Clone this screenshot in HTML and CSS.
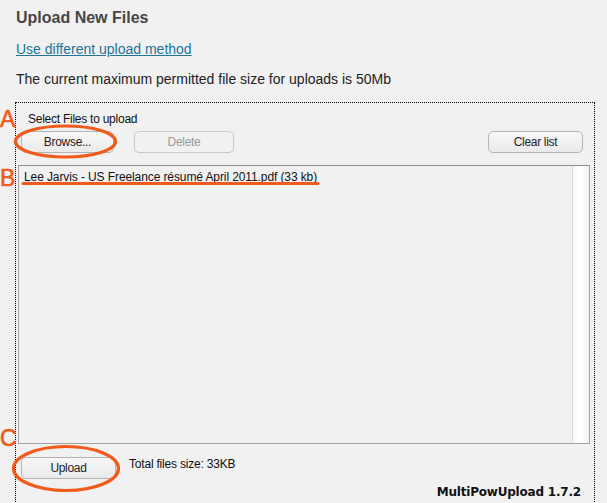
FILE: index.html
```html
<!DOCTYPE html>
<html lang="en">
<head>
    <meta charset="UTF-8">
    <title>Upload New Files</title>
    <link rel="stylesheet" href="styles.css">
</head>
<body>
    <div class="page">
        <h2 class="title">Upload New Files</h2>
        <p class="switch"><a href="#">Use different upload method</a></p>
        <p class="limit">The current maximum permitted file size for uploads is 50Mb</p>

        <div class="uploader">
            <div class="label">Select Files to upload</div>
            <div class="toolbar">
                <button class="btn btn-browse">Browse...</button>
                <button class="btn btn-delete" disabled>Delete</button>
                <button class="btn btn-clear">Clear list</button>
            </div>
            <div class="file-list">
                <ul class="files">
                    <li>Lee Jarvis - US Freelance résumé April 2011.pdf (33 kb)</li>
                </ul>
                <div class="scrollbar"></div>
            </div>
            <div class="footer">
                <button class="btn btn-upload">Upload</button>
                <span class="total">Total files size: 33KB</span>
            </div>
            <div class="brand">MultiPowUpload 1.7.2</div>
        </div>
    </div>

    <!-- annotations drawn over the screenshot -->
    <span class="mark mark-a">A</span>
    <span class="mark mark-b">B</span>
    <span class="mark mark-c">C</span>
    <svg class="marks" width="607" height="503" viewBox="0 0 607 503">
        <ellipse cx="65.5" cy="141.5" rx="50" ry="15.5" />
        <line x1="23" y1="183.5" x2="318" y2="183.5" />
        <ellipse cx="66" cy="468.5" rx="52.5" ry="22" />
    </svg>
</body>
</html>
```

FILE: styles.css
```css
:root {
    --bg: #f1f1f1;
    --text: #222;
    --link: #21759b;
    --orange: #f05a1a;
    --btn-border: #b4b4b4;
}

* {
    box-sizing: border-box;
}

html, body {
    margin: 0;
    padding: 0;
    height: 100%;
    overflow: hidden;
}

body {
    background: var(--bg);
    font-family: "Liberation Sans", Arial, sans-serif;
    color: var(--text);
    position: relative;
}

.page {
    padding: 8px 12px 0 16px;
}

.title {
    margin: 0;
    font-size: 16px;
    line-height: 19px;
    font-weight: bold;
    color: #464646;
}

.switch {
    margin: 14px 0 0;
    font-size: 14px;
    line-height: 16px;
}

.switch a {
    color: var(--link);
    text-decoration: underline;
}

.limit {
    margin: 14px 0 0;
    font-size: 14px;
    line-height: 16px;
    color: #222;
}

/* flash uploader box */
.uploader {
    margin: 15px 0 0 -1px;
    border: 1px dotted #000;
    height: 420px;
    display: flex;
    flex-direction: column;
}

.label {
    margin: 9px 0 0 12px;
    font-size: 12px;
    line-height: 14px;
    letter-spacing: -0.25px;
    color: #111;
}

.toolbar {
    display: flex;
    gap: 20px;
    margin-top: 5px;
    padding: 0 11px 0 5px;
}

.btn {
    height: 22px;
    padding: 0;
    border: 1px solid var(--btn-border);
    border-radius: 5px;
    background: linear-gradient(#f8f7f8, #ebeaeb);
    font-family: "Liberation Sans", Arial, sans-serif;
    font-size: 12px;
    letter-spacing: -0.3px;
    color: #222;
}

.btn-browse {
    width: 93px;
}

.btn-delete {
    width: 100px;
    color: #9a9a9a;
    border-color: #c9c9c9;
    background: #f1f1f1;
}

.btn-clear {
    width: 95px;
    margin-left: auto;
}

.file-list {
    display: flex;
    margin: 12px 4px 0 2px;
    height: 279px;
    border: 1px solid #a3a3a3;
    border-top-color: #8f8f8f;
}

.files {
    flex: 1;
    margin: 0;
    padding: 4px 0 0 5px;
    list-style: none;
    font-size: 12px;
    line-height: 14px;
    letter-spacing: -0.1px;
    color: #111;
}

.scrollbar {
    width: 17px;
    border-left: 1px solid #dcdcdc;
    background: linear-gradient(90deg, #f6f6f6, #fff 40%, #f3f3f3);
}

.footer {
    display: flex;
    align-items: flex-start;
    gap: 13px;
    margin-top: 13px;
    padding-left: 5px;
}

.btn-upload {
    width: 95px;
}

.total {
    font-size: 12px;
    line-height: 14px;
    letter-spacing: -0.2px;
    color: #111;
}

.brand {
    margin-top: 6px;
    padding-right: 13px;
    text-align: right;
    font-family: "DejaVu Sans", Verdana, sans-serif;
    font-size: 12px;
    line-height: 15px;
    letter-spacing: -0.2px;
    font-weight: bold;
    color: #111;
}

/* orange annotations */
.mark {
    position: absolute;
    left: 0;
    font-size: 23px;
    line-height: 23px;
    color: var(--orange);
    -webkit-text-stroke: 0.6px var(--orange);
}

.mark-a { top: 108px; }
.mark-b { top: 167px; }
.mark-c { top: 427px; }

.marks {
    position: absolute;
    top: 0;
    left: 0;
    pointer-events: none;
}

.marks ellipse,
.marks line {
    fill: none;
    stroke: var(--orange);
    stroke-width: 3.2;
    stroke-linecap: round;
}
```
